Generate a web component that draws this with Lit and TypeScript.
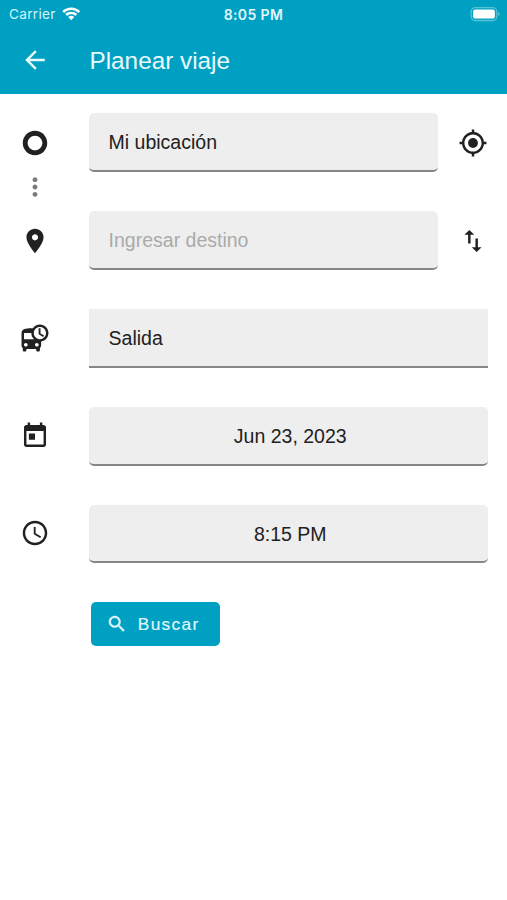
import { LitElement, html, css, svg } from "lit";
import { customElement, property } from "lit/decorators.js";

const ICONS: Record<string, string> = {
  back: "M20 11H7.83l5.59-5.59L12 4l-8 8 8 8 1.41-1.41L7.83 13H20v-2z",
  origin:
    "M2 12C2 6.48 6.48 2 12 2s10 4.48 10 10-4.48 10-10 10S2 17.52 2 12zm10 6c3.31 0 6-2.69 6-6s-2.69-6-6-6-6 2.69-6 6 2.69 6 6 6z",
  more: "M12 8c1.1 0 2-.9 2-2s-.9-2-2-2-2 .9-2 2 .9 2 2 2zm0 2c-1.1 0-2 .9-2 2s.9 2 2 2 2-.9 2-2-.9-2-2-2zm0 6c-1.1 0-2 .9-2 2s.9 2 2 2 2-.9 2-2-.9-2-2-2z",
  place:
    "M12 2C8.13 2 5 5.13 5 9c0 5.25 7 13 7 13s7-7.75 7-13c0-3.87-3.13-7-7-7zm0 9.5c-1.38 0-2.5-1.12-2.5-2.5s1.12-2.5 2.5-2.5 2.5 1.12 2.5 2.5-1.12 2.5-2.5 2.5z",
  locate:
    "M12 8c-2.21 0-4 1.79-4 4s1.79 4 4 4 4-1.79 4-4-1.79-4-4-4zm8.94 3c-.46-4.17-3.77-7.48-7.94-7.94V1h-2v2.06C6.83 3.52 3.52 6.83 3.06 11H1v2h2.06c.46 4.17 3.77 7.48 7.94 7.94V23h2v-2.06c4.17-.46 7.48-3.77 7.94-7.94H23v-2h-2.06zM12 19c-3.87 0-7-3.13-7-7s3.13-7 7-7 7 3.13 7 7-3.13 7-7 7z",
  swap: "M16 17.01V10h-2v7.01h-3L15 21l4-3.99h-3zM9 3L5 6.99h3V14h2V6.99h3L9 3z",
  departure:
    "M16 1c-2.4 0-4.52 1.21-5.78 3.05.01-.01.01-.02.02-.03C9.84 4 9.42 4 9 4c-4.42 0-8 .5-8 4v10c0 .88.39 1.67 1 2.22V22c0 .55.45 1 1 1h1c.55 0 1-.45 1-1v-1h8v1c0 .55.45 1 1 1h1c.55 0 1-.45 1-1v-1.78c.61-.55 1-1.34 1-2.22v-3.08c3.39-.49 6-3.39 6-6.92 0-3.87-3.13-7-7-7zM4.5 19c-.83 0-1.5-.67-1.5-1.5S3.67 16 4.5 16s1.5.67 1.5 1.5S5.33 19 4.5 19zM3 13V8h6c0 1.96.81 3.73 2.11 5H3zm10.5 6c-.83 0-1.5-.67-1.5-1.5s.67-1.5 1.5-1.5 1.5.67 1.5 1.5-.67 1.5-1.5 1.5zm2.5-6c-2.76 0-5-2.24-5-5s2.24-5 5-5 5 2.24 5 5-2.24 5-5 5zm.5-9H15v5l3.62 2.16.75-1.23-2.87-1.68V4z",
  today:
    "M19 3h-1V1h-2v2H8V1H6v2H5c-1.11 0-1.99.9-1.99 2L3 19c0 1.1.89 2 2 2h14c1.1 0 2-.9 2-2V5c0-1.1-.9-2-2-2zm0 16H5V8h14v11zM7 10h5v5H7v-5z",
  clock:
    "M11.99 2C6.47 2 2 6.48 2 12s4.47 10 9.99 10C17.52 22 22 17.52 22 12S17.52 2 11.99 2zM12 20c-4.42 0-8-3.58-8-8s3.58-8 8-8 8 3.58 8 8-3.58 8-8 8zm.5-13H11v6l5.25 3.15.75-1.23-4.5-2.67V7z",
  search:
    "M15.5 14h-.79l-.28-.27C15.41 12.59 16 11.11 16 9.5 16 5.91 13.09 3 9.5 3S3 5.91 3 9.5 5.91 16 9.5 16c1.61 0 3.09-.59 4.23-1.57l.27.28v.79l5 4.99L20.49 19l-4.99-5zm-6 0C7.01 14 5 11.99 5 9.5S7.01 5 9.5 5 14 7.01 14 9.5 11.99 14 9.5 14z",
};

@customElement("md-icon")
class MdIcon extends LitElement {
  @property() name = "";
  static styles = css`
    :host {
      display: block;
      width: 30px;
      height: 30px;
    }
    .glyph {
      display: block;
      width: 100%;
      height: 100%;
      fill: currentColor;
      overflow: visible;
    }
  `;
  render() {
    return html`<svg class="glyph" viewBox="-0.25 -0.25 24.5 24.5">${svg`<path d=${ICONS[this.name] ?? ""}></path>`}</svg>`;
  }
}

@customElement("status-bar")
class StatusBar extends LitElement {
  static styles = css`
    :host {
      display: grid;
      grid-template-columns: 1fr auto 1fr;
      align-items: center;
      height: 27px;
      padding: 0 7px 0 9px;
      font: 400 13.6px/27px Inter, sans-serif;
      letter-spacing: 0.3px;
      color: #d5f4fb;
    }
    .carrier {
      display: flex;
      align-items: center;
      gap: 6px;
      padding-top: 1px;
    }
    .time {
      margin-left: -2px;
      padding-top: 1px;
      font-weight: 600;
      font-size: 14px;
      letter-spacing: 0.4px;
      color: #e0f8fc;
    }
    .wifi {
      display: block;
      width: 18.5px;
      height: 14px;
      margin-top: -2px;
      fill: #fff;
    }
    .battery {
      display: block;
      width: 31px;
      height: 16px;
      margin-top: -1px;
      justify-self: end;
    }
  `;
  render() {
    return html`
      <div class="carrier">
        <span>Carrier</span>
        <svg class="wifi" viewBox="0 0 19 14">
          <path d="M9.500 0.300C13 0.300 16.300 1.700 18.700 4L16.800 6C14.900 4.100 12.300 3 9.500 3S4.100 4.100 2.200 6L.3 4C2.700 1.700 6 .3 9.500.3z" />
          <path d="M9.500 4.600C11.900 4.600 14 5.500 15.600 7L13.700 9C12.600 7.900 11.100 7.300 9.500 7.300S6.400 7.900 5.300 9L3.400 7C5 5.500 7.100 4.600 9.500 4.600z" />
          <path d="M9.500 8.900C10.700 8.900 11.800 9.300 12.600 10.100L9.500 13.400 6.400 10.100C7.200 9.300 8.300 8.900 9.500 8.900z" />
        </svg>
      </div>
      <div class="time">8:05 PM</div>
      <svg class="battery" viewBox="0 0 31 16">
        <rect x="2.200" y="1.700" width="25.600" height="12.800" rx="4" fill="none" stroke="#5cc0d7" stroke-width="1.300" />
        <rect x="4.100" y="3.600" width="21.800" height="9" rx="2.200" fill="#fff" />
        <path d="M29.200 6v4.200c1-.3 1.500-1.100 1.500-2.100S30.200 6.300 29.200 6z" fill="#5cc0d7" />
      </svg>
    `;
  }
}

@customElement("app-root")
class AppRoot extends LitElement {
  static styles = css`
    :host {
      display: block;
      height: 900px;
      overflow: hidden;
      background: #fff;
      color: #212121;
      font-family: "Liberation Sans", Arial, sans-serif;
    }
    .header {
      height: 93.6px;
      background: #00a0c3;
      color: #e9fafd;
    }
    .toolbar {
      display: flex;
      align-items: center;
      height: 65.4px;
      padding-left: 20px;
      gap: 39.5px;
    }
    .title {
      padding-top: 2px;
      font-size: 24.3px;
      line-height: 30px;
    }
    .form {
      display: flex;
      flex-direction: column;
      gap: 39.05px;
      padding: 19.8px 19.5px 0 20px;
    }
    .row {
      display: grid;
      grid-template-columns: 30px 1fr;
      column-gap: 39px;
      align-items: center;
      height: 58.75px;
    }
    .row.action {
      grid-template-columns: 30px 1fr 30px;
    }
    .row.action .field {
      margin-right: -19.8px;
    }
    .leading {
      position: relative;
    }
    .dots {
      position: absolute;
      top: 44px;
      left: 0;
      color: #7a7a7a;
    }
    .field {
      box-sizing: border-box;
      height: 58.75px;
      padding: 0 19.6px;
      border-bottom: 2px solid #868686;
      border-radius: 5px;
      background: #eee;
      font-size: 19.5px;
      line-height: 59.4px;
      white-space: nowrap;
    }
    .field.select {
      border-radius: 0;
    }
    .field.center {
      text-align: center;
      padding: 0 16px 0 20px;
    }
    .placeholder {
      color: #aaa;
    }
    .trailing {
      justify-self: end;
    }
    .lifted {
      margin-top: -1px;
    }
    .search {
      display: flex;
      align-items: center;
      gap: 10px;
      box-sizing: border-box;
      width: 128.6px;
      height: 44px;
      margin: -0.4px 0 0 71.2px;
      padding: 0 0 0 14.6px;
      border: 0;
      border-radius: 5px;
      background: #00a0c3;
      color: #dff7fc;
      font: 400 17.3px/44px "Liberation Sans", Arial, sans-serif;
      letter-spacing: 1.35px;
      -webkit-text-stroke: 0.2px #dff7fc;
    }
    .search-icon {
      width: 22px;
      height: 22px;
      stroke: #dff7fc;
      stroke-width: 0.4px;
    }
  `;

  render() {
    return html`
      <header class="header">
        <status-bar></status-bar>
        <div class="toolbar">
          <md-icon name="back"></md-icon>
          <div class="title">Planear viaje</div>
        </div>
      </header>
      <main class="form">
        <div class="row action">
          <div class="leading">
            <md-icon name="origin"></md-icon>
            <md-icon class="dots" name="more"></md-icon>
          </div>
          <div class="field">Mi ubicación</div>
          <md-icon class="trailing" name="locate"></md-icon>
        </div>
        <div class="row action">
          <md-icon name="place"></md-icon>
          <div class="field placeholder">Ingresar destino</div>
          <md-icon class="trailing" name="swap"></md-icon>
        </div>
        <div class="row">
          <md-icon name="departure"></md-icon>
          <div class="field select">Salida</div>
        </div>
        <div class="row">
          <md-icon class="lifted" name="today"></md-icon>
          <div class="field center">Jun 23, 2023</div>
        </div>
        <div class="row">
          <md-icon class="lifted" name="clock"></md-icon>
          <div class="field center">8:15 PM</div>
        </div>
        <button class="search">
          <md-icon class="search-icon" name="search"></md-icon>
          <span>Buscar</span>
        </button>
      </main>
    `;
  }
}
